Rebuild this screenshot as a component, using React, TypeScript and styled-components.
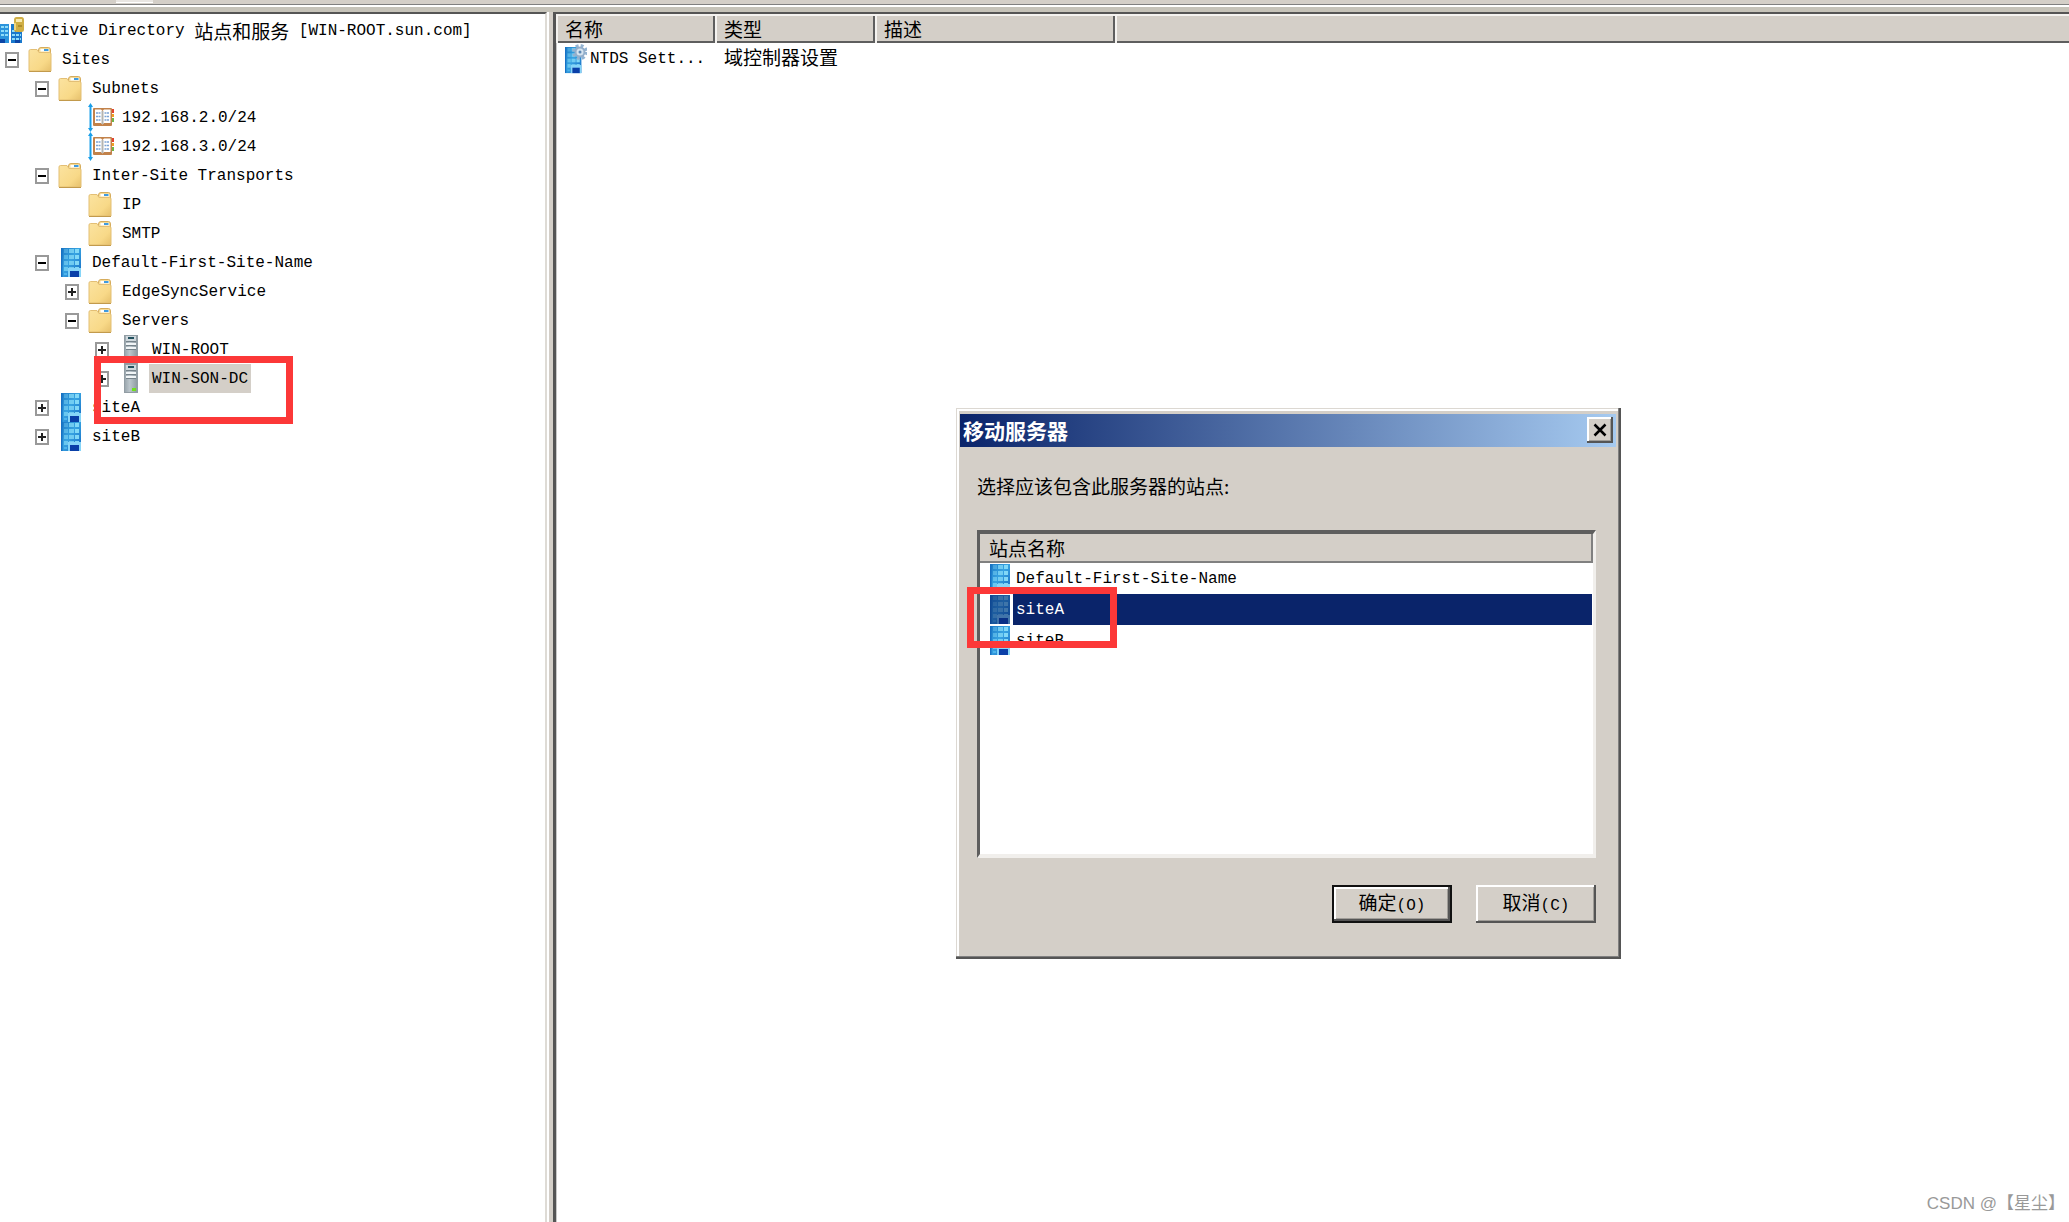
import React, { useId } from "react";
import styled, { createGlobalStyle, css } from "styled-components";

const latin = '"Liberation Mono", "Noto Sans CJK SC", monospace';
const han = '"Noto Sans CJK SC", sans-serif';
const face = "#d4cfc8";
const shade = "#808080";
const dark = "#555555";
const navy = "#0a246a";

const GlobalStyle = createGlobalStyle`
  * { box-sizing: border-box; }
  body { margin: 0; background: #fff; color: #000; font: 16px/20px ${latin}; }
  button { font: inherit; color: inherit; padding: 0; }
  ul { list-style: none; margin: 0; padding: 0; }
  table { border-collapse: collapse; border-spacing: 0; }
  td, th { padding: 0; text-align: left; font-weight: 400; }
  p, h1 { margin: 0; }
`;

/* ---------- Icons ---------- */

const Svg = styled.svg`
  display: block;
  flex: none;
`;

function FolderIcon() {
  const id = useId();
  return (
    <Svg width="26" height="27" viewBox="0 0 26 27" aria-hidden="true">
      <defs>
        <linearGradient id={id} x1="0" y1="0" x2="1" y2="1">
          <stop offset="0" stopColor="#fbe3a0" />
          <stop offset="0.65" stopColor="#f8d988" />
          <stop offset="1" stopColor="#e6c06c" />
        </linearGradient>
      </defs>
      <path d="M10.500 7V4Q10.500 1.500 13 1.500H20.500Q22.500 1.500 22.500 4V9H10.500Z" fill="#f6dc98" stroke="#d6ac5c" />
      <rect x="12.500" y="3" width="8.500" height="2.500" fill="#fff" />
      <rect x="16" y="3" width="4.500" height="2" fill="#3f9be0" />
      <path d="M1 5Q1 3.500 2.500 3.500H9L11 6.500H21.500Q23 6.500 23 8V25H1Z" fill={`url(#${id})`} stroke="#e3bf75" />
      <path d="M1 25.500H23" stroke="#c29a4c" />
    </Svg>
  );
}

function SiteArt() {
  const id = useId();
  return (
    <>
      <defs>
        <linearGradient id={id} x1="0" y1="0" x2="1" y2="1">
          <stop offset="0" stopColor="#1b78c4" />
          <stop offset="0.45" stopColor="#38a4e2" />
          <stop offset="1" stopColor="#1468c2" />
        </linearGradient>
      </defs>
      <rect width="20" height="29" fill={`url(#${id})`} />
      {[1, 7, 13, 19].map((y, i) => (
        <g key={y} fill="#86dbf8">
          <rect x="3" y={y} width="4" height="4" opacity={0.35 + i * 0.1} />
          <rect x="8" y={y} width="5" height="4" opacity="0.75" />
          <rect x="14" y={y} width="4" height="4" opacity="0.95" />
        </g>
      ))}
      <path d="M3 25H6V27H3Z" fill="#4db4ec" />
      <path d="M0 0H1.500V29H0Z" fill="#1671c4" />
      <path d="M7 29V20H20V29Z" fill="#86d5f8" />
      <path d="M9 29V23H18V29Z" fill="#0a3fa8" />
    </>
  );
}

function SiteIcon({ dimmed = false }: { dimmed?: boolean }) {
  return (
    <Svg width="20" height="29" viewBox="0 0 20 29" aria-hidden="true">
      <SiteArt />
      {dimmed && <rect width="20" height="29" fill={navy} opacity="0.55" />}
    </Svg>
  );
}

function ServerIcon() {
  const id = useId();
  return (
    <Svg width="14" height="29" viewBox="0 0 14 29" aria-hidden="true">
      <defs>
        <linearGradient id={id} x1="0" y1="0" x2="1" y2="0">
          <stop offset="0" stopColor="#98a4ab" />
          <stop offset="0.4" stopColor="#bcc6cc" />
          <stop offset="1" stopColor="#8c989f" />
        </linearGradient>
      </defs>
      <rect x="0.500" y="0.500" width="13" height="28" fill={`url(#${id})`} stroke="#929da4" />
      <rect x="2" y="1" width="10" height="5" fill="#cfd8dd" />
      <rect x="4" y="2" width="6" height="2" fill="#22505e" />
      <rect x="2" y="8" width="10" height="2" fill="#f1f5f7" />
      <rect x="2" y="12" width="10" height="2" fill="#f1f5f7" />
      <path d="M2 6.500H12M2 10.500H12M2 14.500H12" stroke="#76838b" />
      <rect x="8" y="24" width="4" height="3" fill="#6fe01c" />
    </Svg>
  );
}

function SubnetIcon() {
  return (
    <Svg width="26" height="29" viewBox="0 0 26 29" aria-hidden="true">
      <path d="M2.500 2V27" stroke="#1b9fe8" strokeWidth="2" />
      <path d="M0 4L2.500 0L5 4ZM0 25L2.500 29L5 25Z" fill="#1b9fe8" />
      <path d="M23 6H26V10H23Z" fill="#e2432f" />
      <path d="M23 11H26V14H23Z" fill="#f0a020" />
      <path d="M23 15H26V19H23Z" fill="#6fb548" />
      <rect x="5" y="5" width="19" height="18" rx="1" fill="#c2824a" />
      <path d="M7 6.500H13L14.500 8L16 6.500H22.500V20H16L14.500 21.500L13 20H7Z" fill="#fff" />
      <path d="M14.500 8V21" stroke="#b4b4b0" strokeWidth="2" />
      <path d="M8 10H12.500M8 13.500H12.500M8 17H12.500M16.500 10H21M16.500 13.500H21M16.500 17H21" stroke="#7ba3d4" strokeWidth="1.500" strokeDasharray="2 .5" />
    </Svg>
  );
}

function RootIcon() {
  return (
    <Svg width="24" height="27" viewBox="0 0 24 27" aria-hidden="true">
      <path d="M0 7H9V26H0Z" fill="#2b93dc" />
      <path d="M11 7H22V26H11Z" fill="#1a78cc" />
      <path d="M1 10H8M1 14H8M1 18H8M12 14H21M12 18H21M12 22H21" stroke="#8fdcf8" strokeWidth="2" strokeDasharray="3 1" />
      <path d="M0 22H5V26H0ZM15 23H20V26H15Z" fill="#0b45a6" />
      <path d="M14 3Q14 0 16.500 0H21.500Q24 0 24 3V13Q24 15 21.500 15H16.500Q14 15 14 13Z" fill="#cfae45" />
      <path d="M16 2H22V5H16Z" fill="#f7eab0" />
      <path d="M15 6V13" stroke="#ecd582" strokeWidth="2" />
      <path d="M18 9H22" stroke="#8a6a14" />
    </Svg>
  );
}

function SettingsIcon() {
  return (
    <Svg width="22" height="30" viewBox="0 0 22 30" aria-hidden="true">
      <g transform="translate(0 3) scale(.82 .9)">
        <SiteArt />
      </g>
      <circle cx="15" cy="8" r="6" fill="none" stroke="#93b3d1" strokeWidth="4" strokeDasharray="2.700 2" />
      <circle cx="15" cy="8" r="4.500" fill="#d5e3ef" stroke="#93aeca" strokeWidth="2" />
      <circle cx="15" cy="8" r="1.500" fill="#5b87b4" />
    </Svg>
  );
}

/* ---------- Console frame ---------- */

const Console = styled.main`
  position: relative;
  display: flex;
  flex-direction: column;
  min-height: 100vh;
  background: ${face};
`;

const ToolbarEdge = styled.div`
  height: 12px;
  padding-left: 116px;
  background: linear-gradient(${face} 4px, ${shade} 4px 5px, #fff 5px 7px, #c6c3b9 7px);
`;

const ToolbarTab = styled.div`
  width: 37px;
  height: 3px;
  background: #e9e6e2;
  border-bottom: 1px solid #fff;
`;

const Panes = styled.div`
  flex: 1;
  display: grid;
  grid-template-columns: 547px minmax(0, 1fr);
  column-gap: 6px;
`;

const Pane = styled.section<{ $edge: "left" | "right" }>`
  background: #fff;
  border-top: 2px solid ${dark};
  ${({ $edge }) =>
    $edge === "left"
      ? css`padding-top: 2px; border-right: 2px solid #dedbd5; box-shadow: 2px 0 #fff;`
      : css`border-left: 3px solid ${dark}; box-shadow: inset 1px 0 #c8c8c8;`}
`;

/* ---------- Tree ---------- */

const Han = styled.span`
  font-family: ${han};
  font-size: 19px;
`;

const TreeRow = styled.li<{ $level: number }>`
  position: relative;
  display: flex;
  align-items: center;
  height: 29px;
  padding-left: ${({ $level }) => ($level ? $level * 30 - 25 : 0)}px;
  white-space: pre;
`;

const Toggle = styled.button`
  width: 14px;
  height: 16px;
  flex: none;
  border: 2px solid #999;
  border-radius: 0;
  background: linear-gradient(#000, #000) center / 8px 2px no-repeat #fff;
  &[aria-expanded="false"] {
    background: linear-gradient(#222, #222) center / 8px 2px no-repeat,
      linear-gradient(#222, #222) center / 2px 8px no-repeat #fff;
  }
`;

const ToggleGap = styled.span`
  width: 14px;
  flex: none;
`;

const IconSlot = styled.span<{ $root?: boolean }>`
  display: flex;
  justify-content: center;
  flex: none;
  width: ${({ $root }) => ($root ? 24 : 28)}px;
  margin-left: ${({ $root }) => ($root ? 0 : 8)}px;
`;

const TreeLabel = styled.span<{ $selected?: boolean }>`
  display: flex;
  align-items: center;
  height: 29px;
  margin-left: 4px;
  padding: 0 3px;
  background: ${({ $selected }) => ($selected ? face : "transparent")};
`;

const Marker = styled.span<{ $x: number; $y: number; $w: number; $h: number }>`
  position: absolute;
  z-index: 2;
  left: ${({ $x }) => $x}px;
  top: ${({ $y }) => $y}px;
  width: ${({ $w }) => $w}px;
  height: ${({ $h }) => $h}px;
  border: 7px solid #fc3838;
  pointer-events: none;
`;

const icons = { root: RootIcon, folder: FolderIcon, site: SiteIcon, server: ServerIcon, subnet: SubnetIcon };

type Node = { level: number; icon: keyof typeof icons; name: React.ReactNode; open?: boolean; selected?: boolean };

const nodes: Node[] = [
  { level: 0, icon: "root", name: <>Active Directory <Han>站点和服务</Han> [WIN-ROOT.sun.com]</> },
  { level: 1, icon: "folder", name: "Sites", open: true },
  { level: 2, icon: "folder", name: "Subnets", open: true },
  { level: 3, icon: "subnet", name: "192.168.2.0/24" },
  { level: 3, icon: "subnet", name: "192.168.3.0/24" },
  { level: 2, icon: "folder", name: "Inter-Site Transports", open: true },
  { level: 3, icon: "folder", name: "IP" },
  { level: 3, icon: "folder", name: "SMTP" },
  { level: 2, icon: "site", name: "Default-First-Site-Name", open: true },
  { level: 3, icon: "folder", name: "EdgeSyncService", open: false },
  { level: 3, icon: "folder", name: "Servers", open: true },
  { level: 4, icon: "server", name: "WIN-ROOT", open: false },
  { level: 4, icon: "server", name: "WIN-SON-DC", open: false, selected: true },
  { level: 2, icon: "site", name: "siteA", open: false },
  { level: 2, icon: "site", name: "siteB", open: false },
];

function Tree() {
  return (
    <ul role="tree">
      {nodes.map((n, i) => {
        const Icon = icons[n.icon];
        return (
          <TreeRow key={i} $level={n.level} role="treeitem" aria-selected={!!n.selected}>
            {n.level > 0 &&
              (n.open === undefined ? <ToggleGap /> : <Toggle type="button" aria-expanded={n.open} aria-label="Toggle" />)}
            <IconSlot $root={n.level === 0}><Icon /></IconSlot>
            <TreeLabel $selected={n.selected}>{n.name}</TreeLabel>
            {n.selected && <Marker $x={94} $y={-8} $w={199} $h={68} />}
          </TreeRow>
        );
      })}
    </ul>
  );
}

/* ---------- Details list ---------- */

const Details = styled.table`
  width: 100%;
  table-layout: fixed;
`;

const Column = styled.col<{ $w?: number }>`
  width: ${({ $w }) => ($w ? `${$w}px` : "auto")};
`;

const HeadCell = styled.th`
  height: 29px;
  padding-left: 9px;
  background: ${face};
  box-shadow: inset 2px 2px #f4f2ef, inset -2px -2px #5e5e5e;
  font: 19px/20px ${han};
`;

const HeadFill = styled.td`
  background: ${face};
  box-shadow: inset 2px 2px #f4f2ef, inset 0 -2px #5e5e5e;
`;

const Cell = styled.td`
  height: 31px;
  padding-left: 9px;
`;

const Item = styled.span`
  display: flex;
  align-items: center;
  gap: 3px;
`;

/* ---------- Dialog ---------- */

const Dialog = styled.section`
  position: absolute;
  left: 956px;
  top: 408px;
  width: 665px;
  padding: 6px 5px 36px 4px;
  background: ${face};
  box-shadow: inset -2px -2px ${dark}, inset -3px -3px ${shade}, inset 1px 1px #dcd8d2, inset 3px 3px #fff;
`;

const TitleBar = styled.header`
  display: flex;
  align-items: center;
  justify-content: space-between;
  height: 33px;
  padding: 0 3px 2px;
  background: linear-gradient(90deg, ${navy}, #a6caf0);
`;

const Title = styled.h1`
  color: #fff;
  font: 700 21px/24px ${han};
`;

const raised = css`
  border: 0;
  background: ${face};
  box-shadow: inset -2px -2px ${dark}, inset 2px 2px #fff, inset -3px -3px #a09d98;
`;

const Close = styled.button`
  ${raised}
  display: grid;
  place-items: center;
  width: 26px;
  height: 26px;
`;

const Body = styled.div`
  padding: 27px 20px 0 17px;
`;

const Prompt = styled.p`
  font: 19px/24px ${han};
`;

const SiteBox = styled.div`
  height: 328px;
  margin-top: 32px;
  background: #fff;
  border: solid;
  border-width: 4px 3px 4px 3px;
  border-color: #5e5e5e #f1efec #f1efec #5e5e5e;
`;

const SiteTable = styled.table`
  width: 100%;
`;

const SiteHead = styled.th`
  height: 28px;
  padding-left: 9px;
  background: ${face};
  border-right: 2px solid ${shade};
  border-bottom: 2px solid ${shade};
  font: 19px/24px ${han};
`;

const SiteRow = styled.div`
  position: relative;
  display: flex;
  align-items: center;
  gap: 3px;
  height: 31px;
  padding-left: 10px;
`;

const SiteName = styled.span<{ $selected?: boolean }>`
  display: flex;
  align-items: center;
  flex: 1;
  height: 31px;
  padding-left: 3px;
  color: ${({ $selected }) => ($selected ? "#fff" : "#000")};
  background: ${({ $selected }) => ($selected ? navy : "transparent")};
`;

const Actions = styled.footer`
  display: flex;
  justify-content: flex-end;
  gap: 24px;
  margin-top: 27px;
`;

const Action = styled.button<{ $primary?: boolean }>`
  ${raised}
  width: 120px;
  height: 38px;
  ${({ $primary }) =>
    $primary &&
    css`
      border: 2px solid #111;
    `}
`;

function MoveServerDialog() {
  return (
    <Dialog role="dialog" aria-labelledby="move-title">
      <TitleBar>
        <Title id="move-title">移动服务器</Title>
        <Close type="button" aria-label="关闭">
          <Svg width="14" height="14" viewBox="0 0 14 14">
            <path d="M1.500 1.500L12.500 12.500M12.500 1.500L1.500 12.500" stroke="#000" strokeWidth="2.500" />
          </Svg>
        </Close>
      </TitleBar>
      <Body>
        <Prompt>选择应该包含此服务器的站点:</Prompt>
        <SiteBox>
          <SiteTable>
            <thead><tr><SiteHead scope="col">站点名称</SiteHead></tr></thead>
            <tbody>
              {["Default-First-Site-Name", "siteA", "siteB"].map((name) => {
                const selected = name === "siteA";
                return (
                  <tr key={name} aria-selected={selected}>
                    <td>
                      <SiteRow>
                        <SiteIcon dimmed={selected} />
                        <SiteName $selected={selected}>{name}</SiteName>
                        {selected && <Marker $x={-13} $y={-7} $w={150} $h={61} />}
                      </SiteRow>
                    </td>
                  </tr>
                );
              })}
            </tbody>
          </SiteTable>
        </SiteBox>
        <Actions>
          <Action type="button" $primary><Han>确定</Han>(O)</Action>
          <Action type="button"><Han>取消</Han>(C)</Action>
        </Actions>
      </Body>
    </Dialog>
  );
}

const Watermark = styled.div`
  position: absolute;
  right: 4px;
  bottom: 6px;
  color: #999;
  font: 17px/24px "Liberation Sans", "Noto Sans CJK SC", sans-serif;
`;

export default function App() {
  return (
    <>
      <GlobalStyle />
      <Console>
        <ToolbarEdge><ToolbarTab /></ToolbarEdge>
        <Panes>
          <Pane $edge="left"><Tree /></Pane>
          <Pane $edge="right">
            <Details>
              <colgroup>
                <Column $w={159} />
                <Column $w={160} />
                <Column $w={240} />
                <Column />
              </colgroup>
              <thead>
                <tr>
                  <HeadCell scope="col">名称</HeadCell>
                  <HeadCell scope="col">类型</HeadCell>
                  <HeadCell scope="col">描述</HeadCell>
                  <HeadFill />
                </tr>
              </thead>
              <tbody>
                <tr>
                  <Cell><Item><SettingsIcon />NTDS Sett...</Item></Cell>
                  <Cell><Han>域控制器设置</Han></Cell>
                  <Cell />
                  <Cell />
                </tr>
              </tbody>
            </Details>
          </Pane>
        </Panes>
        <MoveServerDialog />
        <Watermark>CSDN @【星尘】</Watermark>
      </Console>
    </>
  );
}
